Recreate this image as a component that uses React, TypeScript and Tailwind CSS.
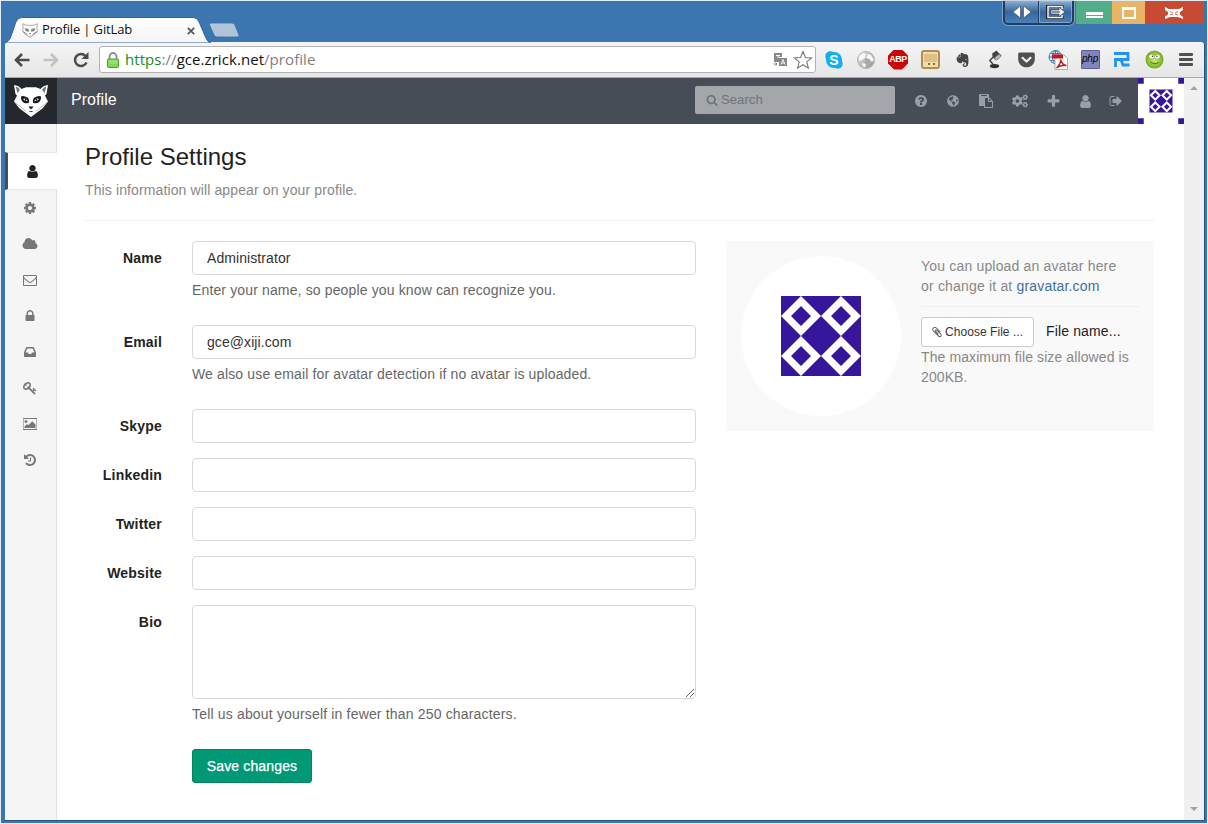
import type { ReactNode } from "react";
import { FaCogs, FaGlobeAmericas, FaGetPocket, FaEvernote } from "react-icons/fa";

const PATHS = {
  user: "M1536 1399q0 109-62.5 187t-150.5 78h-854q-88 0-150.5-78t-62.5-187q0-85 8.5-160.5t31.5-152 58.5-131 94-89 134.5-34.5q131 128 313 128t313-128q76 0 134.5 34.5t94 89 58.5 131 31.5 152 8.5 160.5zm-256-887q0 159-112.5 271.5t-271.5 112.5-271.5-112.5-112.5-271.5 112.5-271.5 271.5-112.5 271.5 112.5 112.5 271.5z",
  cog: "M1152 896q0-106-75-181t-181-75-181 75-75 181 75 181 181 75 181-75 75-181zm512-109v222q0 12-8 23t-20 13l-185 28q-19 54-39 91 35 50 107 138 10 12 10 25t-9 23q-27 37-99 108t-94 71q-12 0-26-9l-138-108q-44 23-91 38-16 136-29 186-7 28-36 28h-222q-14 0-24.5-8.5t-11.5-21.5l-28-184q-49-16-90-37l-141 107q-10 9-25 9-14 0-25-11-126-114-165-168-7-10-7-23 0-12 8-23 15-21 51-66.5t54-70.5q-27-50-41-99l-183-27q-13-2-21-12.5t-8-23.5v-222q0-12 8-23t19-13l186-28q14-46 39-92-40-57-107-138-10-12-10-24 0-10 9-23 26-36 98.5-107.5t94.5-71.5q13 0 26 10l138 107q44-23 91-38 16-136 29-186 7-28 36-28h222q14 0 24.5 8.5t11.5 21.5l28 184q49 16 90 37l142-107q9-9 24-9 13 0 25 10 129 119 165 170 7 8 7 22 0 12-8 23-15 21-51 66.5t-54 70.5q26 50 41 98l183 28q13 2 21 12.5t8 23.5z",
  cloud: "M1984 1152q0 159-112.5 271.5t-271.5 112.5h-1088q-185 0-316.5-131.5t-131.5-316.5q0-132 71-241.5t187-163.5q-2-28-2-43 0-212 150-362t362-150q158 0 286.5 88t187.5 230q70-62 166-62 106 0 181 75t75 181q0 75-41 138 129 30 213 134.5t84 239.5z",
  envelope: "M1664 1504v-768q-32 36-69 66-268 206-426 338-51 43-83 67t-86.5 48.5-102.5 24.5h-2q-48 0-102.5-24.5t-86.5-48.5-83-67q-158-132-426-338-37-30-69-66v768q0 13 9.5 22.5t22.5 9.5h1472q13 0 22.5-9.5t9.5-22.5zm0-1051v-24.5l-.5-13-3-12.5-5.5-9-9-7.5-14-2.5h-1472q-13 0-22.5 9.5t-9.5 22.5q0 168 147 284 193 152 401 317 6 5 35 29.5t46 37.5 44.5 31.5 50.5 27.5 43 9h2q20 0 43-9t50.5-27.5 44.5-31.5 46-37.5 35-29.5q208-165 401-317 54-43 100.5-115.5t46.5-131.5zm128-37v1088q0 66-47 113t-113 47h-1472q-66 0-113-47t-47-113v-1088q0-66 47-113t113-47h1472q66 0 113 47t47 113z",
  lock: "M640 768h512v-192q0-106-75-181t-181-75-181 75-75 181v192zm832 96v576q0 40-28 68t-68 28h-960q-40 0-68-28t-28-68v-576q0-40 28-68t68-28h32v-192q0-184 132-316t316-132 316 132 132 316v192h32q40 0 68 28t28 68z",
  inbox: "M1151 960h316q-1-3-2.5-8.5t-2.5-7.5l-212-496h-708l-212 496q-1 3-2.5 8.5t-2.5 7.5h316l95 192h320zm513 30v482q0 26-19 45t-45 19h-1408q-26 0-45-19t-19-45v-482q0-62 25-123l238-552q10-25 36.5-42t52.5-17h832q26 0 52.5 17t36.5 42l238 552q25 61 25 123z",
  key: "M832 512q0-80-56-136t-136-56-136 56-56 136q0 42 19 83-41-19-83-19-80 0-136 56t-56 136 56 136 136 56 136-56 56-136q0-42-19-83 41 19 83 19 80 0 136-56t56-136zm851 704q0 17-49 66t-66 49q-9 0-28.5-16t-36.5-33-38.5-40-24.5-26l-96 96 220 220q28 28 28 68 0 42-39 81t-81 39q-40 0-68-28l-671-671q-176 131-365 131-163 0-265.5-102.5t-102.5-265.5q0-160 95-313t248-248 313-95q163 0 265.5 102.5t102.5 265.5q0 189-131 365l355 355 96-96q-3-3-26-24.5t-40-38.5-33-36.5-16-28.5q0-17 49-66t66-49q13 0 23 10 6 6 46 44.5t82 79.5 86.5 86 73 78 28.5 41z",
  image: "M576 576q0 80-56 136t-136 56-136-56-56-136 56-136 136-56 136 56 56 136zm1024 384v448h-1408v-192l320-320 160 160 512-512zm96-704h-1600q-13 0-22.5 9.5t-9.5 22.5v1216q0 13 9.5 22.5t22.5 9.5h1600q13 0 22.5-9.5t9.5-22.5v-1216q0-13-9.5-22.5t-22.5-9.5zm160 32v1216q0 66-47 113t-113 47h-1600q-66 0-113-47t-47-113v-1216q0-66 47-113t113-47h1600q66 0 113 47t47 113z",
  history: "M1664 896q0 156-61 298t-164 245-245 164-298 61q-172 0-327-72.5t-264-204.5q-7-10-6.5-22.5t8.5-20.5l137-138q10-9 25-9 16 2 23 12 73 95 179 147t225 52q104 0 198.5-40.5t163.5-109.5 109.5-163.5 40.5-198.5-40.5-198.5-109.5-163.5-163.5-109.5-198.5-40.5q-98 0-188 35.5t-160 101.5l137 138q31 30 14 69-17 40-59 40h-448q-26 0-45-19t-19-45v-448q0-42 40-59 39-17 69 14l130 129q107-101 244.5-156.5t284.5-55.5q156 0 298 61t245 164 164 245 61 298zm-640-288v448q0 14-9 23t-23 9h-320q-14 0-23-9t-9-23v-64q0-14 9-23t23-9h224v-352q0-14 9-23t23-9h64q14 0 23 9t9 23z",
  plus: "M1600 736v192q0 40-28 68t-68 28h-416v416q0 40-28 68t-68 28h-192q-40 0-68-28t-28-68v-416h-416q-40 0-68-28t-28-68v-192q0-40 28-68t68-28h416v-416q0-40 28-68t68-28h192q40 0 68 28t28 68v416h416q40 0 68 28t28 68z",
  signOut: "M704 1440q0 4 1 20t.5 26.5-3 23.5-10 19.5-20.5 6.5h-320q-119 0-203.5-84.5t-84.5-203.5v-704q0-119 84.5-203.5t203.5-84.5h320q13 0 22.5 9.5t9.5 22.5q0 4 1 20t.5 26.5-3 23.5-10 19.5-20.5 6.5h-320q-66 0-113 47t-47 113v704q0 66 47 113t113 47h312l11.5 1 11.5 3 8 5.5 7 9 2 13.5zm928-544q0 26-19 45l-544 544q-19 19-45 19t-45-19-19-45v-288h-448q-26 0-45-19t-19-45v-384q0-26 19-45t45-19h448v-288q0-26 19-45t45-19 45 19l544 544q19 19 19 45z",
  question: "M1024 1376v-192q0-14-9-23t-23-9h-192q-14 0-23 9t-9 23v192q0 14 9 23t23 9h192q14 0 23-9t9-23zm256-672q0-88-55.5-163t-138.5-116-170-41q-243 0-371 213-15 24 8 42l132 100q7 6 19 6 16 0 25-12 53-68 86-92 34-24 86-24 48 0 85.5 26t37.5 59q0 38-20 61t-68 45q-63 28-115.5 86.5t-52.5 125.5v36q0 14 9 23t23 9h192q14 0 23-9t9-23q0-19 21.5-49.5t54.5-49.5q32-18 49-28.5t46-35 44.5-48 28-60.5 12.5-81zm384 192q0 209-103 385.5t-279.5 279.5-385.5 103-385.5-103-279.5-279.5-103-385.5 103-385.5 279.5-279.5 385.5-103 385.5 103 279.5 279.5 103 385.5z",
  search: "M1216 832q0-185-131.5-316.5t-316.5-131.5-316.5 131.5-131.5 316.5 131.5 316.5 316.5 131.5 316.5-131.5 131.5-316.5zm512 832q0 52-38 90t-90 38q-54 0-90-38l-343-342q-179 124-399 124-143 0-273.5-55.5t-225-150-150-225-55.5-273.5 55.5-273.5 150-225 225-150 273.5-55.5 273.5 55.5 225 150 150 225 55.5 273.5q0 220-124 399l343 343q37 37 37 90z",
  paperclip: "M1596 1385q0 117-79 196t-196 79q-135 0-235-100l-777-776q-113-115-113-271 0-159 110-270t269-111q158 0 273 113l605 606q10 10 10 22 0 16-30.5 46.5t-46.5 30.5q-13 0-23-10l-606-607q-79-77-181-77-106 0-179 75t-73 181q0 105 76 181l776 777q63 63 145 63 64 0 106-42t42-106q0-82-63-145l-581-581q-26-24-60-24-29 0-48 19t-19 48q0 32 25 59l410 410q10 10 10 22 0 16-31 47t-47 31q-12 0-22-10l-410-410q-63-61-63-149 0-82 57-139t139-57q88 0 149 63l581 581q100 98 100 235z",
  paste: "M768 1664h896v-640h-416q-40 0-68-28t-28-68v-416h-384v1152zm256-1440v-64q0-13-9.5-22.5t-22.5-9.5h-704q-13 0-22.5 9.5t-9.5 22.5v64q0 13 9.5 22.5t22.5 9.5h704q13 0 22.5-9.5t9.5-22.5zm256 672h299l-299-299v299zm512 128v672q0 40-28 68t-68 28h-960q-40 0-68-28t-28-68v-160h-544q-40 0-68-28t-28-68v-1344q0-40 28-68t68-28h1088q40 0 68 28t28 68v328q21 13 36 28l408 408q28 28 48 76t20 88z",
};

function Icon({ name, className = "h-3.5" }: { name: keyof typeof PATHS; className?: string }) {
  const width = name === "cloud" ? 2048 : name === "image" ? 1856 : 1792;
  return (
    <svg viewBox={`0 0 ${width} 1792`} className={className} fill="currentColor">
      <path d={PATHS[name]} />
    </svg>
  );
}

function Tanuki({ className }: { className: string }) {
  return (
    <svg viewBox="0 0 34 32" className={className}>
      <path d="M0 0Q5 .5 7.500 4L12 2.200H22L26.500 4Q29 .5 34 0L32.500 9 31 10.500 34 16.500 29 23 17 32 5 23 0 16.500 3 10.500 1.500 9Z" fill="#fff" />
      <path d="M1.800 1.500Q4.500 2 6 4.700L3.300 8.300ZM32.200 1.500Q29.500 2 28 4.700L30.700 8.300Z" fill="#777a80" />
      <path d="M7 11.500Q9.500 10 13.500 12.500 16 15 14.800 17.700 11.500 19 8.700 17 6.300 14.500 7 11.500ZM27 11.500Q24.500 10 20.500 12.500 18 15 19.200 17.700 22.500 19 25.300 17 27.700 14.500 27 11.500Z" fill="#17191d" />
      <path d="M9 14Q11.500 12.500 13.600 15.500 11.500 17.200 9 14ZM25 14Q22.500 12.500 20.400 15.500 22.500 17.200 25 14Z" fill="#fff" />
      <circle cx="11.600" cy="14.800" r="1" fill="#17191d" />
      <circle cx="22.400" cy="14.800" r="1" fill="#17191d" />
      <path d="M14.500 21.500h5L18.300 23.300 17 24.200l-1.300-.9ZM15.300 26.200h3.400v.8h-3.400Z" fill="#17191d" />
      <path d="M.8 17.500 12 26M33.200 17.500 22 26" stroke="#24272d" strokeWidth=".6" opacity=".5" />
    </svg>
  );
}

function TanukiOutline({ className }: { className: string }) {
  return (
    <svg viewBox="0 0 16 15" className={className} fill="none" stroke="#999" strokeWidth=".8">
      <path d="m.7.7 3.300 1.600h8L15.300.7l-.5 4 .7 3.300-2.500 3-5 3.300-5-3.300-2.500-3 .7-3.300Z" fill="#fff" />
      <path d="m3 5.500 3.500.8.3 2-2.800-.3ZM13 5.500l-3.500.8-.3 2 2.800-.3Z" fill="#777" />
      <path d="M7 10.500h2M7.500 12.300h1M1 8.500l4.500 3M15 8.500l-4.500 3" stroke="#777" />
    </svg>
  );
}

function Identicon({ className }: { className: string }) {
  const cells = [
    [60, 60],
    [100, 60],
    [60, 100],
    [100, 100],
  ];
  return (
    <svg viewBox="0 0 160 160" className={className}>
      <rect width="160" height="160" fill="#fff" />
      <path d="M0 0h20v20H0zM140 0h20v20h-20zM0 140h20v20H0zM140 140h20v20h-20zM40 40h80v80H40z" fill="#36169b" />
      {cells.map(([x, y]) => (
        <path
          key={`${x}-${y}`}
          fill="#fff"
          fillRule="evenodd"
          d={`M${x} ${y - 20}l20 20-20 20-20-20zM${x} ${y - 10}l-10 10 10 10 10-10z`}
        />
      ))}
    </svg>
  );
}

function TitleBar() {
  return (
    <div className="flex h-[41px] shrink-0 items-start pr-[2px]">
      <div className="relative mt-[15px] h-[26px] w-[207px]">
        <svg className="absolute top-0 left-0 h-[27px] w-[208px]" viewBox="0 0 210 27" preserveAspectRatio="none">
          <defs>
            <linearGradient id="tab" x2="0" y2="1">
              <stop offset="0" stopColor="#fff" />
              <stop offset="1" stopColor="#f5f5f5" />
            </linearGradient>
          </defs>
          <path
            d="M0 27C4 26 6 24 7.500 19L12 6Q14 1.500 18 1.500H190Q195 1.500 197 6L203 20Q205 26 209 27Z"
            fill="url(#tab)"
            stroke="#2e5f96"
          />
        </svg>
        <div className="relative flex h-[27px] items-center pl-[18px]">
          <TanukiOutline className="mt-[2px] h-[15px] w-[16px]" />
          <span className="ml-[4px] w-[145px] font-['Open_Sans','Noto_Sans',sans-serif] text-[13px] tracking-[-0.15px] whitespace-nowrap text-[#111]">
            Profile | GitLab
          </span>
          <svg viewBox="0 0 8 8" className="mt-[2px] h-[8px] w-[8px]">
            <path d="m.8.8 6.400 6.400M7.200.8.800 7.200" stroke="#555" strokeWidth="1.700" />
          </svg>
        </div>
      </div>
      <svg viewBox="0 0 32 16" className="mt-[21px] -ml-[3px] h-[16px] w-[32px]">
        <path d="M3 1H24Q26 1 27 3L31 13Q31.500 15 29 15H9Q7 15 6 13L1.500 3Q1 1 3 1Z" fill="#b0c4d8" stroke="#356ca6" strokeWidth=".8" />
      </svg>
      <div className="ml-auto flex items-start">
        <div className="mr-[2px] flex h-[24px] w-[71px] overflow-hidden rounded-b-[5px] border-x-2 border-b-2 border-[#203c5e] bg-linear-to-b from-[#8faccd] via-[#34679f] to-[#4a80b8] outline outline-[#a9c3de]/60">
          <div className="flex w-[34px] items-center justify-center border-r border-[#1f3e63]">
            <svg viewBox="0 0 18 12" className="h-[12px] w-[18px]" fill="#fff">
              <path d="M7.500 0v12L0 6ZM10.500 0v12L18 6Z" stroke="#555" strokeWidth=".7" />
            </svg>
          </div>
          <div className="flex flex-1 items-center justify-center border border-[#a5bdd8]/60">
            <svg viewBox="0 0 20 14" className="h-[14px] w-[20px]">
              <path d="M16 3V1H1V13H16V11" fill="none" stroke="#222" strokeWidth="3" />
              <path d="M16 4V1.500H2V12.500H16V10" fill="none" stroke="#f4f4f4" strokeWidth="1.500" />
              <path d="M5 5H13V2.500L19 7l-6 4.500V9H5Z" fill="#f4f4f4" stroke="#333" strokeWidth=".6" />
              <path d="M6 7h8" stroke="#333" />
            </svg>
          </div>
        </div>
        <div className="flex h-[23px] w-[36px] items-center justify-center bg-[#53ad86]">
          <div className="mt-[4px] h-[6px] w-[17px] border-t-[3px] border-b-2 border-white" />
        </div>
        <div className="flex h-[23px] w-[33px] items-center justify-center bg-[#e8b567]">
          <div className="h-[12px] w-[14px] border-2 border-t-[3px] border-white" />
        </div>
        <div className="flex h-[23px] w-[58px] items-center justify-center bg-[#c94a33]">
          <svg viewBox="0 0 18 12" className="h-[12px] w-[18px]">
            <path d="m0 0 4 2H14L18 0V3L15 5V7.500L18 10V12L13 10H5L0 12V9.500L3 7.500V5L0 3Z" fill="#fff" />
            <path d="m5 4.500 3 1.500M13 4.500l-3 1.500M5 8l3-1M13 8l-3-1" stroke="#c94a33" strokeWidth=".8" />
          </svg>
        </div>
      </div>
    </div>
  );
}

function Ext({ children }: { children: ReactNode }) {
  return <div className="flex w-[32px] shrink-0 items-center justify-center">{children}</div>;
}

function Toolbar() {
  return (
    <div className="flex h-[36px] shrink-0 items-center rounded-t-[3px] border-b border-[#aaa] bg-linear-to-b from-[#f5f5f5] to-[#e6e6e6]">
      <svg viewBox="0 0 16 14" className="ml-[9px] h-[14px] w-[16px]" fill="none" stroke="#4c4c4c" strokeWidth="2.600">
        <path d="M15.500 7H2M8 1 2 7l6 6" />
      </svg>
      <svg viewBox="0 0 16 14" className="ml-[13px] h-[14px] w-[16px]" fill="none" stroke="#c2c2c2" strokeWidth="2.600">
        <path d="M.5 7H14M8 1l6 6-6 6" />
      </svg>
      <svg viewBox="0 0 16 16" className="ml-[14px] h-[16px] w-[16px]">
        <path d="M13.500 10.500A6 6 0 1 1 12.500 4" fill="none" stroke="#4c4c4c" strokeWidth="2.500" />
        <path d="M15.500 0v7h-7Z" fill="#4c4c4c" />
      </svg>
      <div className="ml-[10px] flex h-[27px] w-[717px] items-center rounded-[3px] border border-[#b3b3b3] bg-white pl-[7px]">
        <svg viewBox="0 0 12 16" className="h-[16px] w-[12px]">
          <path d="M2.500 8V4.500a3.500 3.500 0 0 1 7 0V8" fill="none" stroke="#8b8b8b" strokeWidth="1.800" />
          <rect x=".5" y="7" width="11" height="8.500" rx="1" fill="#83d456" stroke="#4f9e31" />
          <path d="M1.500 9H10.500M1.500 11H10.500" stroke="#a9e788" />
        </svg>
        <span className="ml-[6px] font-['Open_Sans','Noto_Sans',sans-serif] text-[15px] tracking-[0.06px] whitespace-nowrap text-[#808080]">
          <span className="text-[#1c8a1c]">https</span>://<span className="text-[#111]">gce.zrick.net</span>/profile
        </span>
        <svg viewBox="0 0 15 14" className="ml-auto h-[14px] w-[15px]">
          <path d="M1 0h8v4H6v5H1Z" fill="#888" />
          <path d="M3 2.500h4M5 2v3" stroke="#fff" />
          <rect x="6" y="5" width="8" height="8" fill="#888" />
          <path d="m8 11.500 2-5 2 5M8.700 10h2.600" fill="none" stroke="#fff" strokeWidth=".9" />
          <path d="M.5 11h3M2.500 9.500 4 11l-1.500 2" fill="none" stroke="#888" />
        </svg>
        <svg viewBox="0 0 20 20" className="mr-[2px] ml-[5px] h-[20px] w-[20px]">
          <path d="m10 1.500 2.400 6 6.200.4-4.800 4 1.600 6.200-5.400-3.400-5.400 3.400 1.600-6.200-4.800-4 6.200-.4Z" fill="#fff" stroke="#777" strokeWidth="1.100" />
        </svg>
      </div>
      <div className="ml-[2px] flex">
        <Ext>
          <div className="relative flex h-[18px] w-[18px] items-center justify-center">
            <svg viewBox="0 0 18 18" className="absolute inset-0 h-[18px] w-[18px]" fill="#0fb0f0">
              <circle cx="9" cy="9" r="8" />
              <circle cx="5.300" cy="5.300" r="5" />
              <circle cx="12.700" cy="12.700" r="5" />
            </svg>
            <span className="relative font-['Liberation_Sans',sans-serif] text-[14px] leading-none font-bold text-white">S</span>
          </div>
        </Ext>
        <Ext>
          <svg viewBox="0 0 18 18" className="h-[18px] w-[18px]">
            <defs>
              <linearGradient id="globe" x2="1" y2="1">
                <stop offset="0" stopColor="#e8e8e8" />
                <stop offset="1" stopColor="#8d8d8d" />
              </linearGradient>
            </defs>
            <circle cx="9" cy="9" r="8.500" fill="url(#globe)" stroke="#b4b4b4" />
            <path d="m2 5 4-3 3 1-1 4-3 2-3 1ZM11 3l3 1 3 5-2 2-3-3-3-1ZM5 12l4 1-1 3.500Q5 15.500 5 12Z" fill="#f7f7f7" />
            <path d="m8 7 4 1 2 4-3 4-3-4Z" fill="#aaa" />
          </svg>
        </Ext>
        <Ext>
          <div className="flex h-[20px] w-[20px] items-center justify-center bg-[#c80808] font-['Liberation_Sans',sans-serif] text-[9px] font-bold tracking-[-0.5px] text-white [clip-path:polygon(30%_0,70%_0,100%_30%,100%_70%,70%_100%,30%_100%,0_70%,0_30%)]">
            ABP
          </div>
        </Ext>
        <Ext>
          <div className="flex h-[19px] w-[19px] flex-col items-end justify-end rounded-[3px] border-2 border-[#b08e50] bg-[#f2dca8] px-[1px]">
            <div className="h-[8px] w-full bg-[#dcc085]" />
            <div className="flex gap-[3px] pt-[1px] pr-[2px] pb-[2px]">
              <i className="h-[2px] w-[2px] bg-[#8b6a30]" />
              <i className="h-[2px] w-[2px] bg-[#8b6a30]" />
            </div>
          </div>
        </Ext>
        <Ext>
          <FaEvernote className="h-[16px] w-[15px] text-[#444]" />
        </Ext>
        <Ext>
          <svg viewBox="0 0 16 20" className="h-[19px] w-[15px]">
            <path d="M8 17 3 11 9 5" fill="none" stroke="#444" strokeWidth="1.600" />
            <path d="m5.500 3.500 4.500-3L15.500 6 8.500 9.500Q5.500 8 5.500 3.500Z" fill="#444" />
            <ellipse cx="11.500" cy="7.500" rx="4" ry="1.800" transform="rotate(-38 11.500 7.500)" fill="#bbb" stroke="#555" strokeWidth=".6" />
            <ellipse cx="8" cy="17" rx="5" ry="2.200" fill="#333" />
          </svg>
        </Ext>
        <Ext>
          <FaGetPocket className="h-[19px] w-[19px] text-[#505050]" />
        </Ext>
        <Ext>
          <svg viewBox="0 0 20 20" className="h-[20px] w-[20px]">
            <circle cx="7.500" cy="7" r="6.500" fill="#d7e9f8" stroke="#3e7db9" />
            <path d="M1 7h13M7.500.5v13M2.500 3.500h10M2.500 10.500h10" stroke="#3e7db9" />
            <ellipse cx="7.500" cy="7" rx="3" ry="6.500" fill="none" stroke="#3e7db9" />
            <path d="M7 5h9l3.500 3.500v11H7Z" fill="#fff" stroke="#999" strokeWidth=".8" />
            <rect x="4" y="4.500" width="11" height="4" fill="#c21a1a" />
            <path d="M8.500 18Q13 14 12.500 9.500 14 15 18.500 15.500 13 14.500 8.500 18Z" fill="none" stroke="#c21a1a" strokeWidth="1.400" />
          </svg>
        </Ext>
        <Ext>
          <div className="flex h-[19px] w-[19px] items-center justify-center rounded-[1px] border border-[#5e61a0] bg-[#8284be] pb-[2px] font-['Liberation_Sans',sans-serif] text-[10px] tracking-[-0.2px] text-black italic">
            php
          </div>
        </Ext>
        <Ext>
          <svg viewBox="0 0 16 15" className="h-[15px] w-[16px]" fill="none" stroke="#2093f5" strokeWidth="2.800">
            <path d="M0 1.500h14V7.500H1.500V15M7 7.500l2 5.500h6.500" />
          </svg>
        </Ext>
        <Ext>
          <svg viewBox="0 0 20 20" className="h-[19px] w-[19px]">
            <defs>
              <radialGradient id="lime">
                <stop offset="0" stopColor="#d4f27c" />
                <stop offset="1" stopColor="#6fae1a" />
              </radialGradient>
            </defs>
            <circle cx="10" cy="10" r="9.500" fill="url(#lime)" />
            <ellipse cx="7" cy="7" rx="3" ry="2.600" fill="#fff" stroke="#567e1c" strokeWidth=".5" />
            <ellipse cx="13" cy="7" rx="3" ry="2.600" fill="#fff" stroke="#567e1c" strokeWidth=".5" />
            <circle cx="8" cy="6.500" r=".8" fill="#333" />
            <circle cx="12.500" cy="6.500" r=".8" fill="#333" />
            <path d="M5.500 12.500q5 3.500 9 .5" fill="none" stroke="#3c6310" strokeWidth=".9" />
          </svg>
        </Ext>
        <Ext>
          <div className="flex w-[14px] flex-col gap-[2px]">
            <i className="h-[3px] rounded-[1px] bg-[#505050]" />
            <i className="h-[3px] rounded-[1px] bg-[#505050]" />
            <i className="h-[3px] rounded-[1px] bg-[#505050]" />
          </div>
        </Ext>
      </div>
    </div>
  );
}

function AppHeader() {
  return (
    <header className="flex h-[46px] shrink-0 bg-[#474d57] text-[#999fa8]">
      <div className="flex w-[52px] justify-center bg-[#24272d] pt-[7px]">
        <Tanuki className="h-[32px] w-[34px]" />
      </div>
      <h1 className="ml-[14px] pt-[10px] text-[16px] leading-[24px] tracking-[0.05px] text-white">Profile</h1>
      <div className="mt-[8px] ml-auto flex h-[28px] w-[200px] items-center rounded-[2px] bg-[#a3a6ab] pl-[11px] text-[#6f737a]">
        <Icon name="search" className="h-[12px]" />
        <span className="ml-[3px] text-[13px] tracking-[0.1px]">Search</span>
      </div>
      <nav className="flex w-[243px] items-center pl-[10px]">
        <div className="flex w-[32px] justify-center">
          <Icon name="question" />
        </div>
        <div className="flex w-[32px] justify-center">
          <FaGlobeAmericas className="h-[12px] w-[12px]" />
        </div>
        <div className="flex w-[34px] justify-center">
          <Icon name="paste" />
        </div>
        <div className="flex w-[34px] justify-center">
          <FaCogs className="h-[14px] w-[16px]" />
        </div>
        <div className="flex w-[32px] justify-center">
          <Icon name="plus" className="h-[15px]" />
        </div>
        <div className="flex w-[32px] justify-center">
          <Icon name="user" className="h-[15px]" />
        </div>
        <div className="flex w-[30px] justify-center">
          <Icon name="signOut" />
        </div>
      </nav>
      <Identicon className="h-[46px] w-[46px]" />
    </header>
  );
}

const SIDE_ICONS: (keyof typeof PATHS)[] = ["cog", "cloud", "envelope", "lock", "inbox", "key", "image", "history"];

function Sidebar() {
  return (
    <aside className="flex w-[52px] shrink-0 flex-col bg-[#f5f5f5] pt-[28px] shadow-[inset_-1px_0_#e1e1e1]">
      <div className="flex h-[38px] items-center border-y border-l-[3px] border-y-[#e7e7e7] border-l-[#474d57] bg-white pl-[17px] text-[#222]">
        <Icon name="user" className="h-[15px]" />
      </div>
      {SIDE_ICONS.map((name) => (
        <div key={name} className="flex h-[36px] items-center justify-center pr-[2px] text-[#777]">
          <Icon name={name} />
        </div>
      ))}
    </aside>
  );
}

function Field({ label, value, help }: { label: string; value?: string; help?: string }) {
  return (
    <div className={help ? "flex h-[84px]" : "flex h-[49px]"}>
      <label className="w-[77px] pt-[7px] text-right font-bold tracking-[0.2px] text-[#222]">{label}</label>
      <div className="ml-[30px]">
        <div className="flex h-[34px] w-[504px] items-center rounded-[4px] border border-[#d9d9d9] pl-[14px] tracking-[0.08px] text-[#333]">
          {value}
        </div>
        {help && <p className="mt-[5px] text-[#666]">{help}</p>}
      </div>
    </div>
  );
}

function AvatarPanel() {
  return (
    <section className="flex h-[190px] w-[428px] bg-[#f9f9f9] p-[15px] text-[#888]">
      <Identicon className="h-[160px] w-[160px] rounded-full" />
      <div className="ml-[20px] w-[218px]">
        <p className="tracking-[0.18px]">
          You can upload an avatar here
          <br />
          or change it at <a className="text-[#446e9b]">gravatar.com</a>
        </p>
        <div className="mt-[10px] mb-[10px] border-t border-[#eee]" />
        <div className="flex h-[30px] items-center">
          <button className="flex h-[30px] w-[113px] items-center rounded-[3px] border border-[#ccc] bg-white pl-[9px] text-[12px] tracking-[0.05px] whitespace-nowrap text-[#333]">
            <Icon name="paperclip" className="mr-[2px] h-[12px] text-[#444]" />
            Choose File ...
          </button>
          <span className="ml-[12px] pb-[2px] text-[#222]">File name...</span>
        </div>
        <p className="tracking-[0.1px]">The maximum file size allowed is 200KB.</p>
      </div>
    </section>
  );
}

function Profile() {
  return (
    <main className="flex-1 pl-[28px] text-[14px] leading-[20px] tracking-[0.14px]">
      <div className="w-[1069px]">
        <h2 className="pt-[19px] text-[24px] leading-[28px] tracking-normal text-[#222]">Profile Settings</h2>
        <p className="mt-[9px] tracking-[0.12px] text-[#888]">This information will appear on your profile.</p>
        <div className="mt-[20px] mb-[20px] border-t border-[#eee]" />
        <div className="flex justify-between">
          <form>
            <Field label="Name" value="Administrator" help="Enter your name, so people you know can recognize you." />
            <Field label="Email" value="gce@xiji.com" help="We also use email for avatar detection if no avatar is uploaded." />
            <Field label="Skype" />
            <Field label="Linkedin" />
            <Field label="Twitter" />
            <Field label="Website" />
            <div className="flex">
              <label className="w-[77px] pt-[7px] text-right font-bold tracking-[0.2px] text-[#222]">Bio</label>
              <div className="ml-[30px]">
                <div className="flex h-[94px] w-[504px] items-end justify-end rounded-[4px] border border-[#d9d9d9]">
                  <svg viewBox="0 0 10 10" className="h-[10px] w-[10px]">
                    <path d="M1 9 9 1M5 9l4-4" stroke="#666" />
                  </svg>
                </div>
                <p className="mt-[5px] tracking-[0.17px] text-[#666]">Tell us about yourself in fewer than 250 characters.</p>
                <button
                  type="button"
                  className="mt-[25px] h-[34px] w-[120px] rounded-[3px] border border-[#00855f] bg-[#019875] whitespace-nowrap text-white [-webkit-text-stroke:0.25px_white]"
                >
                  Save changes
                </button>
              </div>
            </div>
          </form>
          <AvatarPanel />
        </div>
      </div>
    </main>
  );
}

export default function App() {
  return (
    <div className="flex h-[824px] w-[1208px] flex-col border border-[#e3edf6] bg-[#3c76b0] pr-[2px] pb-[2px] pl-[3px] font-['Liberation_Sans',Arial,sans-serif]">
      <TitleBar />
      <div className="flex min-h-0 flex-1 flex-col rounded-t-[4px] border-r border-b border-[#27508a] pl-[1px]">
        <Toolbar />
        <div className="flex min-h-0 flex-1">
          <div className="flex flex-1 flex-col bg-white">
            <AppHeader />
            <div className="flex flex-1">
              <Sidebar />
              <Profile />
            </div>
          </div>
          <div className="flex w-[20px] flex-col items-center justify-between bg-[#f0f0f0] pt-[8px] pr-[1px] pb-[9px]">
            <svg viewBox="0 0 8 4" className="h-[4px] w-[8px]">
              <path d="M0 4 4 0l4 4Z" fill="#a3a3a3" />
            </svg>
            <svg viewBox="0 0 8 4" className="h-[4px] w-[8px]">
              <path d="m0 0 4 4 4-4Z" fill="#a3a3a3" />
            </svg>
          </div>
        </div>
      </div>
    </div>
  );
}
